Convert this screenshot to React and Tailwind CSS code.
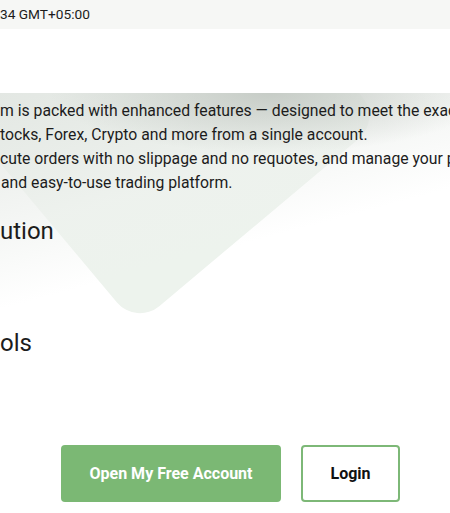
export default function App() {
  return (
    <div className="w-[450px] h-[513px] overflow-hidden bg-white text-[#1c1c1c]" style={{ fontFamily: "Roboto, 'Noto Sans', sans-serif" }}>
      <div className="h-[29px] bg-[#f6f7f5] flex items-center text-[13.7px] leading-none whitespace-nowrap">
        34 GMT+05:00
      </div>
      <div className="h-[64px] bg-white" />
      <div className="relative h-[420px] overflow-hidden">
        <div className="absolute inset-0 pointer-events-none">
          <div className="absolute left-[-4px] top-[-153px] w-[320px] h-[320px] rotate-[50deg] rounded-[30px] bg-[#edf3ed]" />
          <div className="absolute left-0 top-0 w-[450px] h-[240px] bg-[radial-gradient(ellipse_220px_60px_at_270px_0px,rgba(190,196,190,0.8),rgba(190,196,190,0)),linear-gradient(165deg,rgba(226,230,226,0.9)_0%,rgba(238,241,238,0.6)_38%,rgba(255,255,255,0)_60%)]" />
        </div>
        <div className="relative pt-[6px]">
          <div className="text-[15.75px] leading-[24px] whitespace-nowrap">
            <div>m is packed with enhanced features — designed to meet the exacting</div>
            <div>tocks, Forex, Crypto and more from a single account.</div>
            <div>cute orders with no slippage and no requotes, and manage your portfolio</div>
            <div className="pl-[1px]">and easy-to-use trading platform.</div>
          </div>
          <div className="mt-[20px] text-[24px] leading-[32px]">ution</div>
          <div className="mt-[80px] text-[24px] leading-[32px]">ols</div>
          <div className="mt-[86px] flex gap-[20px] pl-[61px]">
            <button className="w-[220px] h-[57px] rounded-[4px] bg-[#7bb874] text-white text-[16px] font-bold">Open My Free Account</button>
            <button className="w-[99px] h-[57px] rounded-[4px] border-2 border-[#7db877] bg-white text-[#111] text-[16px] font-bold">Login</button>
          </div>
        </div>
      </div>
    </div>
  );
}
